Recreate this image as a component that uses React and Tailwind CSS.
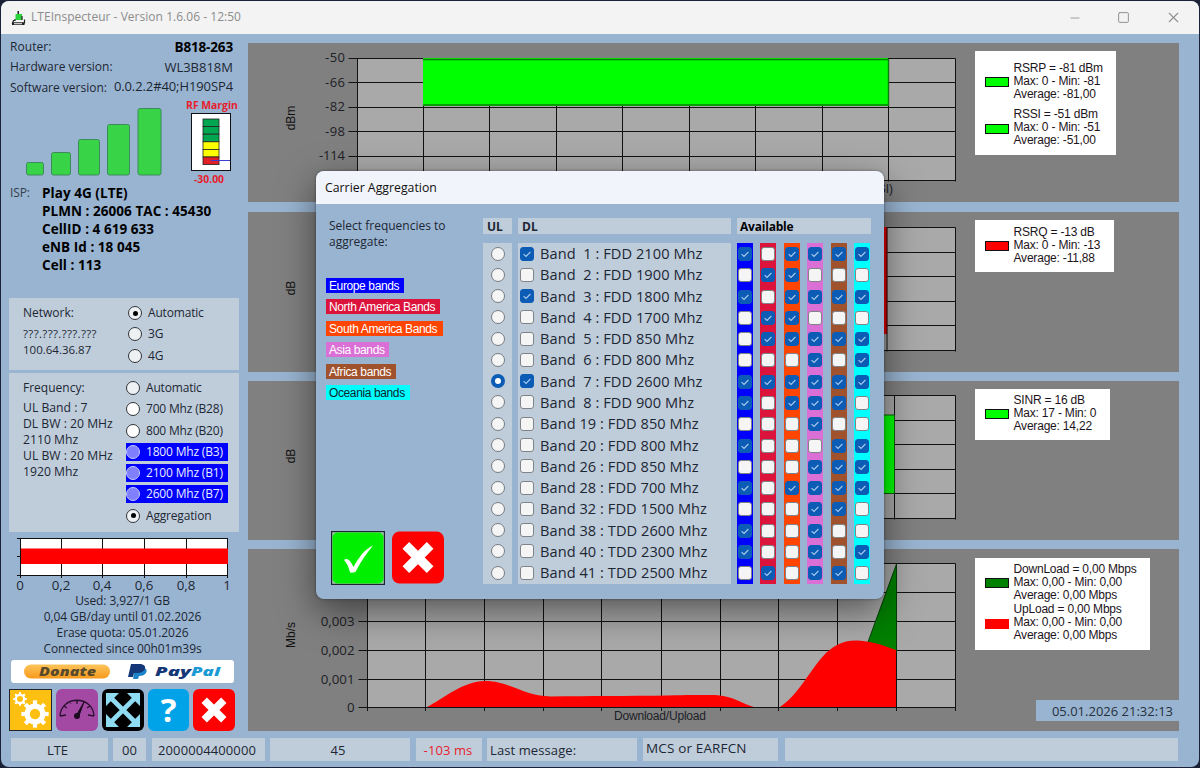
import { Minus, Square, X } from 'lucide-react';
import clsx from 'clsx';

const BANDS = [
  { name: 'Band  1 : FDD 2100 Mhz', dl: true, on: '101111' },
  { name: 'Band  2 : FDD 1900 Mhz', on: '011000' },
  { name: 'Band  3 : FDD 1800 Mhz', dl: true, on: '101111' },
  { name: 'Band  4 : FDD 1700 Mhz', on: '011000' },
  { name: 'Band  5 : FDD 850 Mhz', on: '011111' },
  { name: 'Band  6 : FDD 800 Mhz', on: '000101' },
  { name: 'Band  7 : FDD 2600 Mhz', dl: true, ul: true, on: '111111' },
  { name: 'Band  8 : FDD 900 Mhz', on: '101110' },
  { name: 'Band 19 : FDD 850 Mhz', on: '000100' },
  { name: 'Band 20 : FDD 800 Mhz', on: '100011' },
  { name: 'Band 26 : FDD 850 Mhz', on: '000111' },
  { name: 'Band 28 : FDD 700 Mhz', on: '101111' },
  { name: 'Band 32 : FDD 1500 Mhz', on: '000110' },
  { name: 'Band 38 : TDD 2600 Mhz', on: '100100' },
  { name: 'Band 40 : TDD 2300 Mhz', on: '100101' },
  { name: 'Band 41 : TDD 2500 Mhz', on: '010110' },
];

const REGIONS = [
  { label: 'Europe bands', tag: 'bg-[#0000ff] text-white w-[78px]', col: 'bg-[#0000ff]' },
  { label: 'North America Bands', tag: 'bg-[#dc143c] text-white w-[114px]', col: 'bg-[#dc143c]' },
  { label: 'South America Bands', tag: 'bg-[#ff4500] text-white w-[117px]', col: 'bg-[#ff4500]' },
  { label: 'Asia bands', tag: 'bg-[#da70d6] text-white w-[63px]', col: 'bg-[#da70d6]' },
  { label: 'Africa bands', tag: 'bg-[#a0522d] text-white w-[70px]', col: 'bg-[#a0522d]' },
  { label: 'Oceania bands', tag: 'bg-[#00ffff] text-[#10242c] w-[84px]', col: 'bg-[#00ffff]' },
];

function Check({ on }) {
  return (
    <span
      className={clsx(
        'flex items-center justify-center w-[14px] h-[14px] rounded-[3px] border shrink-0',
        on ? 'bg-[#0c5cb5] border-[#0c5cb5]' : 'bg-[#f5f5f5] border-[#808488]'
      )}
    >
      {on && (
        <svg width="10" height="10" viewBox="0 0 10 10" fill="none" stroke="#a9cbee" strokeWidth="1.1">
          <path d="M1.6 5.2 4 7.4 8.4 3" />
        </svg>
      )}
    </span>
  );
}

function Radio({ on }) {
  return (
    <span
      className={clsx(
        'block w-[14px] h-[14px] rounded-full shrink-0',
        on ? 'bg-white border-[4.5px] border-[#0c5cb5]' : 'bg-[#f5f5f5] border border-[#777b80]'
      )}
    />
  );
}

function FlatRadio({ label, on, blue, white, className }) {
  return (
    <div className={clsx('flex items-center h-[18px] w-[102px]', blue && 'bg-[#0000ff] text-[#e8ecff]', className)}>
      <span
        className={clsx(
          'flex items-center justify-center w-[14px] h-[14px] rounded-full border shrink-0',
          blue ? 'bg-[#8080ff] border-[#c4c8ff]' : 'border-[#303438]',
          !blue && (white ? 'bg-white' : 'bg-[#eef1f4]')
        )}
      >
        {on && <span className="w-[5px] h-[5px] rounded-full bg-black" />}
      </span>
      <span className="ml-[6px] text-[12px] tracking-[-0.18px] whitespace-nowrap">{label}</span>
    </div>
  );
}

function RedCross({ className }) {
  return (
    <svg className={className} viewBox="0 0 42 42">
      <rect width="42" height="42" rx="6" fill="#ff0000" />
      <path d="M11.2 11.2 30.800 30.8M30.8 11.2 11.2 30.8" stroke="#fff" strokeWidth="7.6" />
    </svg>
  );
}

function TitleBar() {
  return (
    <div className="h-[33px] bg-[#f3f3f3] flex items-center">
      <svg className="ml-[10px]" width="15" height="16" viewBox="0 0 15 16">
        <path d="M6.5 1h1.5v3H6.5z" fill="#222" />
        <rect x="4.5" y="4" width="6.5" height="6" fill="#2bd33c" />
        <path d="M4 9v1.5H2.5L1.5 13h12V9.5M11 6v4" fill="none" stroke="#222" strokeWidth="1.2" />
        <path d="M1 12.5h12.5V15H1z" fill="#222" />
        <path d="M3 13.2h8v1H3z" fill="#fff" />
      </svg>
      <span className="ml-[5px] text-[12px] leading-[30px] pb-[2px] text-[#8c8c8c] tracking-[0.03px]">LTEInspecteur - Version 1.6.06 - 12:50</span>
      <div className="ml-auto flex items-center text-[#8f8f8f] mr-[17px]">
        <Minus size={14} strokeWidth={1.4} className="mr-[35px]" />
        <Square size={13} strokeWidth={1.8} className="mr-[35px]" />
        <X size={17} strokeWidth={1.5} />
      </div>
    </div>
  );
}

function SignalBars() {
  const bars = [
    [1, 55, 17, 13],
    [26, 45, 19, 23],
    [53, 32, 21, 36],
    [82, 17, 22, 51],
    [112.5, 1, 23, 67],
  ];
  return (
    <svg width="138" height="70" viewBox="0 0 138 70" className="ml-[16px] mt-[9px] shrink-0">
      {bars.map(([x, y, w, h]) => (
        <rect key={x} x={x + 0.5} y={y + 0.5} width={w} height={h - 0.5} rx="2" fill="#39d348" stroke="#3d8a5c" />
      ))}
    </svg>
  );
}

function RfMeter() {
  const cells = ['#00a650', '#00a650', '#00a650', '#ffff00', '#ffff00', '#e01f26'];
  return (
    <svg width="40" height="58" viewBox="0 0 40 58" className="shrink-0 -ml-[3px]">
      <rect x="0.5" y="0.5" width="39" height="57" fill="#fff" stroke="#111" />
      {cells.map((c, i) => (
        <rect key={i} x="12" y={6 + i * 7.6} width="16" height="7.6" fill={c} stroke="#222" strokeWidth="0.8" />
      ))}
      <path d="M20 47.5H39" stroke="#3b3bd0" />
    </svg>
  );
}

function UsageChart() {
  const xs = [11.5, 52.5, 93.5, 135.5, 177.5, 218.5];
  return (
    <svg width="230" height="56" viewBox="0 0 230 56" fontSize="13.3" fill="#1d2733">
      <rect x="11" y="2" width="208" height="36" fill="#fff" />
      <path d="M8 1.5H219M8 38.5H219M8 19.5H11" stroke="#111" />
      {xs.map((x) => (
        <path key={x} d={`M${x} 1V41`} stroke="#111" />
      ))}
      <rect x="12" y="11.5" width="207" height="15.5" fill="#ff0000" />
      {['0', '0,2', '0,4', '0,6', '0,8', '1'].map((t, i) => (
        <text key={t} x={xs[i] - 0.5} y="52.5" textAnchor="middle">{t}</text>
      ))}
    </svg>
  );
}

function PayPalBanner() {
  return (
    <div className="ml-[2px] mt-[3px] w-[223px] h-[23px] bg-white rounded-[3px]">
      <svg width="223" height="23" viewBox="0 0 223 23">
        <defs>
          <linearGradient id="don" x1="0" y1="0" x2="0" y2="1">
            <stop offset="0" stopColor="#fdc45a" />
            <stop offset="1" stopColor="#f79a1c" />
          </linearGradient>
        </defs>
        <rect x="13" y="4.5" width="86" height="14" rx="7" fill="url(#don)" />
        <text x="28" y="15.5" fontSize="11.5" fontWeight="800" fontStyle="italic" fill="#5a4a2c" textLength="57" lengthAdjust="spacingAndGlyphs">Donate</text>
        <path d="M124 8h9q4 1 2 5-2 3-7 3l-1 3h-5z" fill="#1b84c8" />
        <path d="M120 4h10q5 1 4 5-2 4-8 4h-3l-1 4h-5z" fill="#143778" />
        <text x="144" y="16" fontSize="13" fontWeight="800" fontStyle="italic" fill="#143778" textLength="36" lengthAdjust="spacingAndGlyphs">Pay</text>
        <text x="180" y="16" fontSize="13" fontWeight="800" fontStyle="italic" fill="#1b9ad6" textLength="29" lengthAdjust="spacingAndGlyphs">Pal</text>
      </svg>
    </div>
  );
}

function Gear({ x, y, r, hole }) {
  return (
    <g transform={`translate(${x} ${y})`}>
      {[0, 45, 90, 135].map((a) => (
        <rect key={a} x={-r * 0.2} y={-r * 1.3} width={r * 0.4} height={r * 2.6} fill="#fff" transform={`rotate(${a})`} />
      ))}
      <circle r={r} fill="#fff" />
      <circle r={hole} fill="#fdc010" />
    </g>
  );
}

function ToolButtons() {
  return (
    <div className="flex mt-[6px] h-[42px]">
      <svg width="43" height="42" viewBox="0 0 43 42">
        <rect x="0.5" y="0.5" width="42" height="41" fill="#fdc010" stroke="#1d2430" />
        <Gear x={11} y={10} r={5.2} hole={3} />
        <Gear x={26} y={25} r={10.5} hole={5.2} />
      </svg>
      <svg className="ml-[4px]" width="42" height="42" viewBox="0 0 42 42">
        <rect width="42" height="42" rx="6" fill="#a349a4" />
        <path d="M4 27C5 6 37 6 38 27M4 27l6-1M38 27l-6-1M8 17l3 2M14 12.5l1 2M21 11v4M34 17l-3 2" fill="none" stroke="#2a0f2e" strokeWidth="1.3" />
        <path d="M20 27 28 13 22.5 28Z" fill="#1c0a20" stroke="#1c0a20" />
        <circle cx="21" cy="27" r="3" fill="#1c0a20" />
      </svg>
      <svg className="ml-[4px]" width="42" height="42" viewBox="0 0 42 42">
        <rect width="42" height="42" rx="6" fill="#000" />
        <path d="M8 8 34 34M34 8 8 34" stroke="#8fdcf2" strokeWidth="4.6" />
        <path d="M4 4h13l-13 13zM38 4v13l-13-13zM4 38V25l13 13zM38 38H25l13-13z" fill="#8fdcf2" />
      </svg>
      <div className="ml-[4px] w-[41px] h-[42px] rounded-[6px] bg-[#00a2e8] text-white font-bold text-[33px] leading-[41px] text-center">?</div>
      <RedCross className="ml-[4px] w-[42px] h-[42px]" />
    </div>
  );
}

function Sidebar() {
  return (
    <div className="w-[230px] ml-[8px] text-[12px] text-[#1d2733]">
      <div className="mt-[3px] px-[1px] pr-[6px]">
        <div className="flex justify-between h-[20px] leading-[20px]">
          <span className="tracking-[0.05px]">Router:</span>
          <span className="font-bold text-black text-[13.5px] tracking-[-0.15px]">B818-263</span>
        </div>
        <div className="flex justify-between h-[20px] leading-[20px]">
          <span>Hardware version:</span>
          <span className="text-[13px]">WL3B818M</span>
        </div>
        <div className="flex justify-between h-[21px] leading-[21px]">
          <span>Software version:</span>
          <span className="text-[13px] tracking-[-0.1px] relative -top-px">0.0.2.2#40;H190SP4</span>
        </div>
      </div>
      <div className="flex h-[86px]">
        <SignalBars />
        <div className="ml-[22px] w-[54px] flex flex-col items-center text-[10.4px] font-bold text-[#e81c2c]">
          <span className="leading-[15px] whitespace-nowrap shrink-0">RF Margin</span>
          <RfMeter />
          <span className="leading-[16px] -ml-[6px] shrink-0">-30.00</span>
        </div>
      </div>
      <div className="flex leading-[18px] px-[1px]">
        <span className="w-[32px] text-[#333f4c] tracking-[-0.1px]">ISP:</span>
        <div className="font-bold text-black text-[13.5px] tracking-[0.05px] whitespace-nowrap">
          <p>Play 4G (LTE)</p>
          <p>PLMN : 26006 TAC : 45430</p>
          <p>CellID : 4 619 633</p>
          <p>eNB Id : 18 045</p>
          <p>Cell : 113</p>
        </div>
      </div>
      <div className="mt-[24px] h-[72px] bg-[#bfcddb] flex">
        <div className="w-[119px] pl-[14px] pt-[6px]">
          <p className="leading-[18px]">Network:</p>
          <p className="mt-[4px] leading-[16px] text-[11.5px] tracking-[0.35px]">???.???.???.???</p>
          <p className="leading-[16px] text-[11.5px]">100.64.36.87</p>
        </div>
        <div className="pt-[6px]">
          <FlatRadio label="Automatic" on />
          <FlatRadio label="3G" className="mt-[3px]" />
          <FlatRadio label="4G" className="mt-[4px]" />
        </div>
      </div>
      <div className="mt-[3px] h-[159px] bg-[#bfcddb] flex">
        <div className="w-[117px] pl-[14px] pt-[6px]">
          <p className="leading-[18px]">Frequency:</p>
          <p className="mt-[3px] leading-[16px] text-[12.2px] whitespace-nowrap">
            UL Band : 7<br />DL BW : 20 MHz<br />2110 Mhz<br />UL BW : 20 MHz<br />1920 Mhz
          </p>
        </div>
        <div className="pt-[6px] flex flex-col gap-[3.3px]">
          <FlatRadio label="Automatic" />
          <FlatRadio label="700 Mhz (B28)" white />
          <FlatRadio label="800 Mhz (B20)" white />
          <FlatRadio label="1800 Mhz (B3)" blue />
          <FlatRadio label="2100 Mhz (B1)" blue />
          <FlatRadio label="2600 Mhz (B7)" blue />
          <FlatRadio label="Aggregation" on />
        </div>
      </div>
      <div className="mt-[5px] h-[56px]"><UsageChart /></div>
      <div className="text-center leading-[16px] text-[12px] w-[227px] tracking-[-0.1px]">
        <p>Used: 3,927/1 GB</p>
        <p>0,04 GB/day until 01.02.2026</p>
        <p>Erase quota: 05.01.2026</p>
        <p>Connected since 00h01m39s</p>
      </div>
      <PayPalBanner />
      <ToolButtons />
    </div>
  );
}

function Legend({ items, className, gap, border = [true, true] }) {
  return (
    <div className={clsx("bg-white font-['Liberation_Sans',sans-serif] text-[12px] tracking-[-0.2px] leading-[12.8px] text-[#1c1420] pl-[10px]", className)}>
      {items.map((it, i) => (
        <div key={i} className={clsx('flex items-center whitespace-nowrap', i > 0 && gap)}>
          <span className={clsx('w-[24px] h-[10px] mr-[4.5px] mt-[2px] shrink-0', it.color, border[i] && 'border border-[#111]')} />
          <div>
            {it.lines.map((l) => (
              <p key={l}>{l}</p>
            ))}
          </div>
        </div>
      ))}
    </div>
  );
}

function Grid({ left, right, xs, ys, tick = 9 }) {
  const bottom = ys[ys.length - 1];
  return (
    <g>
      <rect x={left} y={ys[0]} width={right - left} height={bottom - ys[0]} fill="#a9a9a9" />
      {ys.map((y) => (
        <path key={y} d={`M${left - tick} ${y}H${right}`} stroke="#111" />
      ))}
      {[left, ...xs, right].map((x) => (
        <path key={x} d={`M${x} ${ys[0]}V${bottom + 1}`} stroke="#111" />
      ))}
    </g>
  );
}

function AxisTitle({ y, children }) {
  return (
    <text fontSize="12" fontFamily="Liberation Sans" fill="#111" textAnchor="middle" transform={`translate(47 ${y}) rotate(-90)`}>
      {children}
    </text>
  );
}

function Charts() {
  return (
    <div className="w-[931px] ml-[9px] mt-[9px] text-[#1d2026]">
      <div className="h-[159px] bg-[#808080] flex">
        <svg width="727" height="159" viewBox="0 0 727 159" fill="#1d2026" fontSize="13">
          <Grid left={109.5} right={707.5} xs={[175.5, 241.5, 308.5, 374.5, 441.5, 507.5, 574.5, 640.5]} ys={[15.5, 39.5, 64.5, 88.5, 113.5, 137.5]} />
          <rect x="175" y="15" width="465" height="48" fill="#00ff00" />
          <path d="M175 16.5H640M175 62H640M640.5 16V63" stroke="#0a7d0a" strokeWidth="1.4" />
          {['-50', '-66', '-82', '-98', '-114'].map((t, i) => (
            <text key={t} x="97" y={19 + i * 24.5} textAnchor="end" textLength={i === 4 ? 26 : 20}>{t}</text>
          ))}
          <text x="645" y="150" fontSize="12" textAnchor="end" fontFamily="Liberation Sans">SI)</text>
          <AxisTitle y={75}>dBm</AxisTitle>
        </svg>
        <Legend
          className="mt-[8px] w-[141px] h-[104px] pt-[11px]"
          gap="mt-[8px]"
          items={[
            { color: 'bg-[#00ff00]', lines: ['RSRP = -81 dBm', 'Max: 0 - Min: -81', 'Average: -81,00'] },
            { color: 'bg-[#00ff00]', lines: ['RSSI = -51 dBm', 'Max: 0 - Min: -51', 'Average: -51,00'] },
          ]}
        />
      </div>
      <div className="mt-[10px] h-[160px] bg-[#808080] flex">
        <svg width="727" height="160" viewBox="0 0 727 160">
          <Grid left={109.5} right={707.5} xs={[639]} ys={[15.5, 40.5, 64.5, 89.5, 113.5, 138.5]} />
          <rect x="175" y="15" width="463" height="107" fill="#ff0000" />
          <path d="M638.5 15V122" stroke="#8a0000" strokeWidth="1.4" />
          <AxisTitle y={76}>dB</AxisTitle>
        </svg>
        <Legend
          className="mt-[8px] w-[139px] h-[52px] pt-[6px]"
          items={[{ color: 'bg-[#ff0000]', lines: ['RSRQ = -13 dB', 'Max: 0 - Min: -13', 'Average: -11,88'] }]}
        />
      </div>
      <div className="mt-[9px] h-[159px] bg-[#808080] flex">
        <svg width="727" height="159" viewBox="0 0 727 159">
          <Grid left={109.5} right={707.5} xs={[646.5]} ys={[14.5, 39.5, 63.5, 88.5, 112.5, 137.5]} />
          <rect x="175" y="34" width="471" height="78.5" fill="#00ff00" />
          <path d="M175 34H646.5V112.5H175" fill="none" stroke="#0a5c0a" />
          <AxisTitle y={75}>dB</AxisTitle>
        </svg>
        <Legend
          className="mt-[8px] w-[135px] h-[51px] pt-[5px]"
          items={[{ color: 'bg-[#00ff00]', lines: ['SINR = 16 dB', 'Max: 17 - Min: 0', 'Average: 14,22'] }]}
        />
      </div>
      <div className="relative mt-[9px] h-[182px] bg-[#808080] flex">
        <svg width="727" height="182" viewBox="0 0 727 182" fill="#1d2026" fontSize="13.3">
          <Grid
            left={119.5}
            right={707.5}
            xs={[177.5, 236.5, 295.5, 353.5, 413.5, 472.5, 530.5, 589.5, 648.5]}
            ys={[14.5, 43.5, 72.5, 101.5, 130.5, 158.5]}
          />
          {[119.5, 177.5, 236.5, 295.5, 353.5, 413.5, 472.5, 530.5, 589.5, 648.5, 707.5].map((x) => (
            <path key={x} d={`M${x} 158V162`} stroke="#111" />
          ))}
          <path d="M620 93 648.5 15V103Z" fill="#008000" stroke="#053f05" />
          <path d="M179 158C195 150 215 132 237 132C262 132 275 147 303 147.5C340 147 380 147 420 146.5C440 146 450 146 462 146C485 146 492 154 506 158Z" fill="#ff0000" />
          <path d="M532 158C556 142 568 106 589 96C604 88 622 91 648 101V158Z" fill="#ff0000" />
          <path d="M119 158.5H707" stroke="#111" />
          {['0,003', '0,002', '0,001', '0'].map((t, i) => (
            <text key={t} x="106.5" y={77 + i * 28.8} textAnchor="end">{t}</text>
          ))}
          <text x="412" y="171" fontSize="12" fontFamily="Liberation Sans" textAnchor="middle" textLength="92">Download/Upload</text>
          <AxisTitle y={86}>Mb/s</AxisTitle>
        </svg>
        <Legend
          className="mt-[9px] w-[175px] h-[92px] pt-[5px]"
          gap="mt-[2px]"
          border={[true, false]}
          items={[
            { color: 'bg-[#008000]', lines: ['DownLoad = 0,00 Mbps', 'Max: 0,00 - Min: 0,00', 'Average: 0,00 Mbps'] },
            { color: 'bg-[#ff0000]', lines: ['UpLoad = 0,00 Mbps', 'Max: 0,00 - Min: 0,00', 'Average: 0,00 Mbps'] },
          ]}
        />
        <div className="absolute right-0 bottom-[10px] w-[143px] h-[21px] bg-[#99b4d1] leading-[23px] text-right pr-[6px] text-[13px] text-[#26313d]">
          05.01.2026 21:32:13
        </div>
      </div>
    </div>
  );
}

function StatusBar() {
  const cell = 'bg-[#bfcddb] h-[23px] leading-[24px] whitespace-nowrap';
  return (
    <div className="flex mt-[7px] ml-[10px] text-[13px] text-[#1d2733]">
      <div className={clsx(cell, 'w-[97px] pr-[4px] text-center')}>LTE</div>
      <div className={clsx(cell, 'w-[33px] ml-[5px] text-center')}>00</div>
      <div className={clsx(cell, 'w-[113px] ml-[6px] pr-[3px] text-center tracking-[0.1px]')}>2000004400000</div>
      <div className={clsx(cell, 'w-[140px] ml-[5px] pr-[4px] text-center')}>45</div>
      <div className={clsx(cell, 'w-[66px] ml-[6px] pr-[2px] text-center text-[#e81c2c] tracking-[0.1px]')}>-103 ms</div>
      <div className={clsx(cell, 'w-[150px] ml-[5px] pl-[3px] tracking-[0.1px]')}>Last message:</div>
      <div className="w-[135px] h-[23px] ml-[6px] pl-[3px] bg-[#bfcddb] leading-[21px] text-[13.5px] tracking-[0.15px]">MCS or EARFCN</div>
      <div className={clsx(cell, 'w-[393px] ml-[7px]')} />
    </div>
  );
}

function CarrierDialog() {
  return (
    <div className="absolute left-[316px] top-[171px] w-[568px] h-[428px] rounded-[8px] overflow-hidden bg-[#99b4d1] shadow-[0_12px_36px_rgba(0,0,0,0.5),0_0_3px_rgba(0,0,0,0.4)] text-[#1d2733]">
      <div className="h-[33px] bg-[#f2f4fb] pl-[9px] leading-[33px] text-[12.3px] text-[#111]">Carrier Aggregation</div>
      <div className="flex h-[395px]">
        <div className="w-[167px] pl-[10px] pt-[14px] text-[12px] flex flex-col">
          <p className="pl-[3px] leading-[16px]">Select frequencies to<br />aggregate:</p>
          <div className="mt-[28px] flex flex-col gap-[6.4px] font-['Liberation_Sans',sans-serif] text-[12px] tracking-[-0.38px]">
            {REGIONS.map((r) => (
              <span key={r.label} className={clsx('h-[15px] leading-[16px] pl-[3px] whitespace-nowrap', r.tag)}>{r.label}</span>
            ))}
          </div>
          <div className="flex mt-auto mb-[14px] ml-[5px] gap-[7px]">
            <svg width="54" height="54" viewBox="0 0 54 54">
              <rect x="0.5" y="0.5" width="53" height="53" fill="#a9c8b0" stroke="#1d2430" strokeWidth="1.4" />
              <rect x="1.5" y="1.5" width="51" height="51" rx="5" fill="#00ee00" />
              <path d="M13 29C17 26 20 31 22.5 36C28 26 34 18 42 14.5C35 23 29 32 24.5 41C21 42 19 42 19 41C17.5 36 16 32 13 29Z" fill="#fff" />
            </svg>
            <RedCross className="w-[52px] h-[53px]" />
          </div>
        </div>
        <div className="pt-[14px]">
          <div className="flex h-[16px] leading-[17px] font-bold text-[12px]">
            <span className="w-[29px] bg-[#bfcddb] pl-[4px]">UL</span>
            <span className="ml-[6px] w-[213px] bg-[#bfcddb] pl-[4px]">DL</span>
            <span className="ml-[6px] w-[134px] bg-[#bfcddb] pl-[3px] text-black tracking-[-0.2px]">Available</span>
          </div>
          <div className="mt-[9px] flex h-[341px]">
            <div className="w-[29px] bg-[#bfcddb] flex flex-col">
              {BANDS.map((b) => (
                <div key={b.name} className="h-[21.27px] flex items-center justify-center"><Radio on={b.ul} /></div>
              ))}
            </div>
            <div className="ml-[6px] w-[213px] bg-[#bfcddb] flex flex-col">
              {BANDS.map((b) => (
                <div key={b.name} className="h-[21.27px] flex items-center pl-[2px]">
                  <Check on={b.dl} />
                  <span className="ml-[6px] text-[14.6px] leading-[20px] pb-px tracking-[0.05px] whitespace-pre">{b.name}</span>
                </div>
              ))}
            </div>
            <div className="ml-[6px] flex gap-[7.4px]">
              {REGIONS.map((r, c) => (
                <div key={r.label} className={clsx('w-[16px] flex flex-col pt-[0.5px]', r.col)}>
                  {BANDS.map((b) => (
                    <div key={b.name} className="h-[21.27px] flex items-center justify-center"><Check on={b.on[c] === '1'} /></div>
                  ))}
                </div>
              ))}
            </div>
          </div>
        </div>
      </div>
    </div>
  );
}

export default function App() {
  return (
    <div className="relative w-[1200px] h-[768px] overflow-hidden bg-[#1b2238] p-px font-['Open_Sans','Noto_Sans',sans-serif]">
      <div className="h-[766px] rounded-[8px] overflow-hidden bg-[#99b4d1]">
        <TitleBar />
        <div className="flex h-[697px]">
          <Sidebar />
          <Charts />
        </div>
        <StatusBar />
      </div>
      <CarrierDialog />
    </div>
  );
}
